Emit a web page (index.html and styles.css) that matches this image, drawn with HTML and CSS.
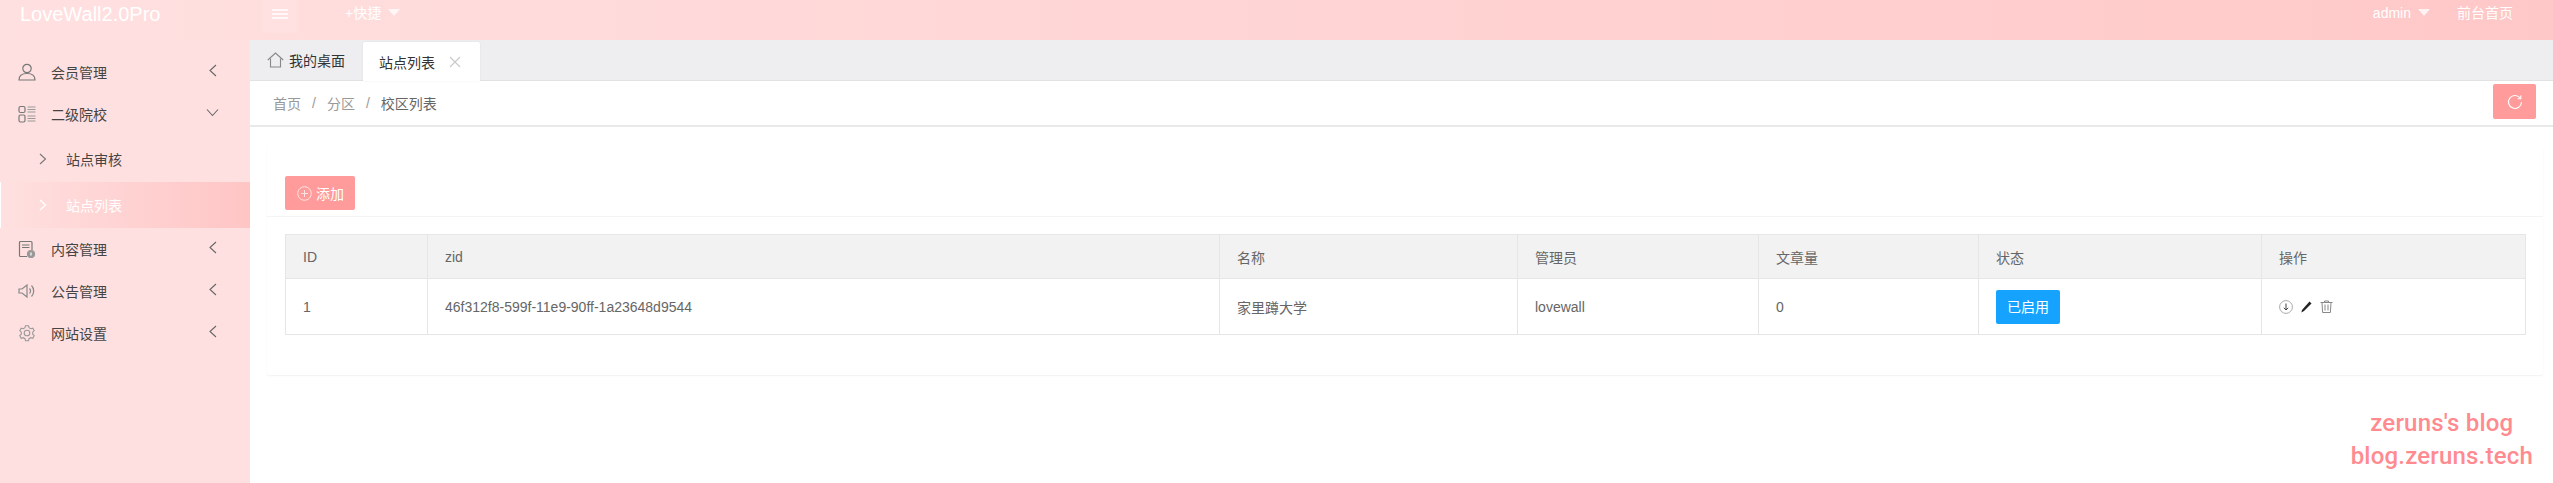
FILE: index.html
```html
<!DOCTYPE html>
<html lang="zh-CN">
<head>
<meta charset="utf-8">
<title>LoveWall2.0Pro</title>
<link rel="stylesheet" href="styles.css">
</head>
<body>
<header class="topbar">
  <div class="logo">LoveWall2.0Pro</div>
  <div class="menu-toggle">
    <svg width="16" height="10" viewBox="0 0 16 10"><path d="M0 1h16M0 5h16M0 9h16" stroke="#fff" stroke-width="1.3" fill="none"/></svg>
  </div>
  <div class="quick">+快捷<span class="caret"></span></div>
  <div class="top-right">
    <span class="user">admin<span class="caret"></span></span>
    <span class="front">前台首页</span>
  </div>
</header>
<div class="shell">
  <nav class="sidebar">
    <a class="nav-item"><svg class="nav-icon" width="18" height="18" viewBox="0 0 18 18" fill="none" stroke="#777" stroke-width="1.2"><circle cx="9" cy="5.5" r="4.2"/><path d="M1 17c0-4.500 3-6.500 8-6.500s8 2 8 6.500z"/></svg><span>会员管理</span><svg class="chev" width="9" height="13" viewBox="0 0 9 13"><path d="M8 1L2 6.500 8 12" fill="none" stroke="#666" stroke-width="1.100"/></svg></a>
    <a class="nav-item"><svg class="nav-icon" width="18" height="18" viewBox="0 0 18 18" fill="none" stroke="#777" stroke-width="1.200"><rect x="1" y="1.500" width="6" height="6" rx="1.500"/><rect x="1" y="10" width="6" height="7" rx="1.500"/><path d="M9.500 2h8M9.500 4.500h8M9.500 7h8M9.500 11h8M9.500 13.500h8M9.500 16h8" stroke="#999"/></svg><span>二级院校</span><svg class="chev chev-down" width="13" height="9" viewBox="0 0 13 9"><path d="M1 1.500L6.500 7.500 12 1.500" fill="none" stroke="#666" stroke-width="1.100"/></svg></a>
    <a class="sub-item"><svg class="sub-chev" width="8" height="12" viewBox="0 0 8 12"><path d="M1 1l5.500 5L1 11" fill="none" stroke="#777" stroke-width="1.100"/></svg><span>站点审核</span></a>
    <a class="sub-item sub-active"><svg class="sub-chev" width="8" height="12" viewBox="0 0 8 12"><path d="M1 1l5.500 5L1 11" fill="none" stroke="#fff" stroke-width="1.300"/></svg><span>站点列表</span></a>
    <a class="nav-item"><svg class="nav-icon" width="18" height="18" viewBox="0 0 18 18" fill="none" stroke="#777" stroke-width="1.200"><path d="M9 16.500H2.500a1 1 0 0 1-1-1v-13a1 1 0 0 1 1-1h10.500a1 1 0 0 1 1 1V10"/><path d="M4 5h7.500M4 7.500h7.500"/><circle cx="13" cy="14" r="3.500" fill="#999" stroke="#999"/><path d="M13 12.500v3" stroke="#fff"/></svg><span>内容管理</span><svg class="chev" width="9" height="13" viewBox="0 0 9 13"><path d="M8 1L2 6.500 8 12" fill="none" stroke="#666" stroke-width="1.100"/></svg></a>
    <a class="nav-item"><svg class="nav-icon" width="18" height="18" viewBox="0 0 18 18" fill="none" stroke="#888" stroke-width="1.200"><path d="M1 7v4h3l5 4V3L4 7z"/><path d="M11.500 6.500a3.500 3.500 0 0 1 0 5M13.500 3.500a8 8 0 0 1 0 11"/></svg><span>公告管理</span><svg class="chev" width="9" height="13" viewBox="0 0 9 13"><path d="M8 1L2 6.500 8 12" fill="none" stroke="#666" stroke-width="1.100"/></svg></a>
    <a class="nav-item"><svg class="nav-icon" width="18" height="18" viewBox="0 0 18 18" fill="none" stroke="#999" stroke-width="1.100"><circle cx="9" cy="9" r="2.800"/><path d="M7.500 2.500h3l.5 2 1.800 1 2-.6 1.400 2.600-1.500 1.500 0 2 1.500 1.500-1.400 2.600-2-.6-1.800 1-.5 2h-3l-.5-2-1.800-1-2 .6-1.400-2.600 1.500-1.500 0-2-1.500-1.500 1.400-2.600 2 .6 1.800-1z" transform="translate(0 -.8)"/></svg><span>网站设置</span><svg class="chev" width="9" height="13" viewBox="0 0 9 13"><path d="M8 1L2 6.500 8 12" fill="none" stroke="#666" stroke-width="1.100"/></svg></a>
  </nav>
  <main class="main">
    <div class="tabs">
      <div class="tab"><svg width="17" height="16" viewBox="0 0 17 16" fill="none" stroke="#888" stroke-width="1.100"><path d="M.8 8L8.500 1l7.700 7"/><path d="M3.500 6.500V15h10V6.500"/></svg><span>我的桌面</span></div>
      <div class="tab tab-active"><span>站点列表</span><svg width="12" height="12" viewBox="0 0 12 12"><path d="M1 1l10 10M11 1L1 11" stroke="#c8c8c8" stroke-width="1.100"/></svg></div>
    </div>
    <div class="crumbs">
      <span>首页</span><i>/</i><span>分区</span><i>/</i><span class="crumb-last">校区列表</span>
      <button class="refresh"><svg width="16" height="16" viewBox="0 0 16 16" fill="none" stroke="#fff" stroke-width="1.100"><path d="M13.500 4.500A6.500 6.500 0 1 0 14.500 8"/><path d="M13.800 1.500v3.300h-3.300"/></svg></button>
    </div>
    <section class="card">
      <div class="card-head">
        <button class="add"><svg width="15" height="15" viewBox="0 0 15 15" fill="none" stroke="#ffe3e3" stroke-width="1"><circle cx="7.500" cy="7.500" r="6.800"/><path d="M7.500 4v7M4 7.500h7"/></svg><span>添加</span></button>
      </div>
      <div class="card-body">
        <table class="grid">
          <thead>
            <tr><th class="c-id">ID</th><th class="c-zid">zid</th><th class="c-name">名称</th><th class="c-admin">管理员</th><th class="c-count">文章量</th><th class="c-state">状态</th><th class="c-op">操作</th></tr>
          </thead>
          <tbody>
            <tr>
              <td>1</td><td>46f312f8-599f-11e9-90ff-1a23648d9544</td><td>家里蹲大学</td><td>lovewall</td><td>0</td>
              <td><span class="badge">已启用</span></td>
              <td><div class="ops">
                <svg width="14" height="14" viewBox="0 0 14 14" fill="none"><circle cx="7" cy="7" r="6.400" stroke="#aaa"/><path d="M7 3.500v6.500M4.800 7.800L7 10l2.200-2.200" stroke="#444"/></svg>
                <svg width="11" height="12" viewBox="0 0 11 12"><path d="M8.500 .5l2 2L3 10 .4 11.500 1 9z" fill="#222"/></svg>
                <svg width="13" height="13" viewBox="0 0 13 13" fill="none" stroke="#888"><path d="M.5 2.500h12M4.500 2.500V1h4v1.500"/><path d="M2 2.500l.6 10h7.800l.6-10"/><path d="M5 4.500v6M8 4.500v6"/></svg>
              </div></td>
            </tr>
          </tbody>
        </table>
      </div>
    </section>
    <div class="watermark"><p>zeruns's blog</p><p>blog.zeruns.tech</p></div>
  </main>
</div>
</body>
</html>
```

FILE: styles.css
```css
* { box-sizing: border-box; }
html, body { margin: 0; height: 100%; overflow: hidden; }
body {
  width: 2553px;
  height: 483px;
  display: flex;
  flex-direction: column;
  background: #fff;
  font-family: "Liberation Sans", "Noto Sans CJK SC", sans-serif;
  font-size: 14px;
  color: #666;
}
button { font: inherit; border: 0; cursor: pointer; }

.topbar {
  height: 40px;
  flex: none;
  display: flex;
  color: #fff;
  background: linear-gradient(90deg, #ffe0e0 0%, #ffc8c8 100%);
}
.logo {
  width: 262px;
  padding-left: 20px;
  font-size: 20px;
  line-height: 28px;
}
.menu-toggle {
  width: 36px;
  height: 33px;
  display: flex;
  justify-content: center;
  padding-top: 9px;
  background: rgba(255, 255, 255, .1);
}
.quick {
  margin-left: 47px;
  line-height: 26px;
  display: flex;
  align-items: flex-start;
}
.caret {
  width: 0;
  height: 0;
  margin: 9px 0 0 7px;
  border-style: solid;
  border-width: 7px 6.500px 0;
  border-color: #fff transparent transparent;
  opacity: .75;
}
.top-right {
  margin-left: auto;
  margin-right: 40px;
  display: flex;
  gap: 27px;
  line-height: 27px;
}
.user { display: flex; align-items: flex-start; }

.shell { flex: 1; display: flex; min-height: 0; }
.sidebar {
  width: 250px;
  flex: none;
  padding-top: 12px;
  background: #ffe0e0;
  color: #444;
}
.nav-item {
  height: 42px;
  display: flex;
  align-items: center;
  padding-left: 18px;
  padding-bottom: 2px;
}
.nav-icon { flex: none; margin-right: 15px; }
.chev { margin-left: auto; margin-right: 33px; margin-top: -4px; }
.chev-down { margin-right: 31px; }
.sub-item {
  height: 46px;
  display: flex;
  align-items: center;
  padding-left: 39px;
}
.sub-item span { margin-left: 19px; }
.sub-active {
  color: #fff;
  border-left: 1px solid #fff;
  padding-left: 38px;
  margin-bottom: 1px;
  background: linear-gradient(90deg, #ffe0e0 0%, #ffc5c5 100%);
}

.main { flex: 1; min-width: 0; position: relative; }
.tabs {
  height: 41px;
  display: flex;
  align-items: flex-end;
  background: #eeeef0;
  border-bottom: 1px solid #e2e2e2;
}
.tab {
  width: 113px;
  height: 40px;
  display: flex;
  align-items: center;
  gap: 5px;
  padding-left: 17px;
  color: #333;
}
.tab-active {
  width: 117px;
  height: 39px;
  margin-bottom: -1px;
  padding-left: 16px;
  gap: 14px;
  background: #fff;
  border-radius: 2px 2px 0 0;
  box-shadow: 0 0 2px rgba(0, 0, 0, .08);
}
.crumbs {
  height: 46px;
  display: flex;
  align-items: center;
  padding: 0 17px 0 23px;
  border-bottom: 2px solid #e9e9e9;
  color: #999;
}
.crumbs i { font-style: normal; margin: 0 11px; }
.crumb-last { color: #666; }
.refresh {
  margin-left: auto;
  margin-bottom: 3px;
  width: 43px;
  height: 35px;
  padding: 0;
  border-radius: 2px;
  background: #ff9b9b;
  display: flex;
  align-items: center;
  justify-content: center;
}
.card {
  width: 2276px;
  margin: 19px 0 0 17px;
  height: 229px;
  background: #fff;
  border-radius: 2px;
  box-shadow: 0 1px 2px rgba(0, 0, 0, .06);
}
.card-head {
  height: 71px;
  padding: 30px 0 0 18px;
  border-bottom: 1px solid #f4f4f4;
}
.add {
  width: 70px;
  height: 34px;
  padding: 0 0 0 12px;
  display: flex;
  align-items: center;
  gap: 4px;
  color: #fff;
  background: #ff9b9b;
  border-radius: 2px;
}
.card-body { padding: 17px 18px 0; }
.grid {
  width: 2240px;
  table-layout: fixed;
  border-collapse: collapse;
  color: #666;
}
.grid th, .grid td {
  border: 1px solid #e6e6e6;
  padding: 0 17px;
  text-align: left;
  font-weight: 400;
}
.grid th { height: 44px; background: #f2f2f2; }
.grid td { height: 56px; }
.c-id { width: 142px; }
.c-zid { width: 792px; }
.c-name { width: 298px; }
.c-admin { width: 241px; }
.c-count { width: 220px; }
.c-state { width: 283px; }
.c-op { width: 264px; }
.badge {
  display: inline-block;
  width: 64px;
  height: 34px;
  line-height: 34px;
  text-align: center;
  color: #fff;
  background: #16a3ff;
  border-radius: 2px;
  vertical-align: middle;
}
.ops { display: flex; align-items: center; gap: 8px; }
.watermark {
  position: absolute;
  right: 20px;
  top: 367px;
  text-align: center;
  font-family: "Roboto", sans-serif;
  font-weight: 500;
  font-size: 24px;
  letter-spacing: .2px;
  line-height: 33px;
  color: #ff8a8f;
}
.watermark p { margin: 0; }
```
